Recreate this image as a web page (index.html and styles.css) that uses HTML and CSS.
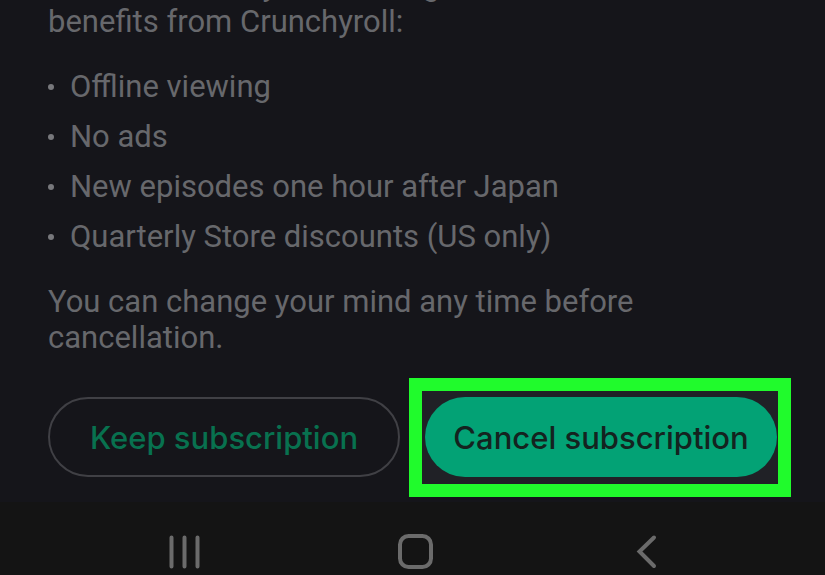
FILE: index.html
```
<!DOCTYPE html>
<html lang="en">
<head>
    <meta charset="UTF-8">
    <meta name="viewport" content="width=device-width, initial-scale=1.0">
    <title>Cancel subscription</title>
    <link rel="stylesheet" href="styles.css">
</head>
<body>

    <!-- Cancellation sheet -->
    <main class="sheet">
        <p class="sheet-text">You immediately start losing<br>benefits from Crunchyroll:</p>

        <ul class="benefits">
            <li>Offline viewing</li>
            <li>No ads</li>
            <li>New episodes one hour after Japan</li>
            <li>Quarterly Store discounts (US only)</li>
        </ul>

        <p class="sheet-text">You can change your mind any time before cancellation.</p>

        <div class="actions">
            <button type="button" class="btn btn-outline">Keep subscription</button>
            <div class="highlight">
                <button type="button" class="btn btn-filled">Cancel subscription</button>
            </div>
        </div>
    </main>

    <!-- System navigation -->
    <nav class="nav-bar">
        <button type="button" class="nav-btn" aria-label="Recent apps">
            <svg width="40" height="40" viewBox="0 0 40 40">
                <path d="M6.5 6.5v29M19.5 6.5v29M32.5 6.5v29"/>
            </svg>
        </button>
        <button type="button" class="nav-btn" aria-label="Home">
            <svg width="40" height="40" viewBox="0 0 40 40">
                <rect x="4" y="5" width="31" height="31" rx="8.5"/>
            </svg>
        </button>
        <button type="button" class="nav-btn" aria-label="Back">
            <svg width="40" height="40" viewBox="0 0 40 40">
                <path d="M27 6.5L12.5 20.5 27 35"/>
            </svg>
        </button>
    </nav>

</body>
</html>
```
FILE: styles.css
```
/* General Page Styles */
* {
    box-sizing: border-box;
}

body {
    display: flex;
    flex-direction: column;
    height: 100vh;
    margin: 0;
    overflow: hidden;
    background: #15151a;
    color: #67686c;
    font-family: Roboto, sans-serif;
    font-size: 31px;
    line-height: 36px;
}

/* Sheet content stays against the bottom, above the navigation */
.sheet {
    flex: 1;
    min-height: 0;
    display: flex;
    flex-direction: column;
    justify-content: flex-end;
    padding: 0 48px 25px;
}

.sheet-text {
    margin: 0;
}

.benefits {
    display: flex;
    flex-direction: column;
    gap: 14px;
    margin: 29px 0;
    padding: 0;
    list-style: none;
}

.benefits li {
    display: flex;
    align-items: center;
    gap: 16px;
}

.benefits li::before {
    content: "";
    width: 6px;
    height: 6px;
    border-radius: 50%;
    background: #77787c;
}

/* Buttons */
.actions {
    display: grid;
    grid-template-columns: 1fr 1fr;
    gap: 25px;
    margin-top: 41px;
}

.btn {
    width: 100%;
    height: 80px;
    padding: 0;
    border: none;
    border-radius: 40px;
    font-family: Inter, sans-serif;
    font-size: 31px;
    font-weight: 500;
    white-space: nowrap;
}

.btn-outline {
    border: 2px solid #404045;
    background: transparent;
    color: #08714f;
}

.btn-filled {
    background: #03a275;
    color: #14231f;
}

/* Green frame around the cancel button */
.highlight {
    position: relative;
    z-index: 0;
}

.highlight::before {
    content: "";
    position: absolute;
    z-index: -1;
    top: -19px;
    right: -14px;
    bottom: -20px;
    left: -16px;
    border: 13px solid #20fb2c;
    background: #202126;
}

/* Navigation Bar */
.nav-bar {
    display: flex;
    justify-content: space-around;
    height: 73px;
    padding: 29px 63px 0 69px;
    background: #141414;
}

.nav-btn {
    width: 40px;
    height: 40px;
    padding: 0;
    border: none;
    background: none;
}

.nav-btn svg {
    display: block;
    fill: none;
    stroke: #6b6b6b;
    stroke-width: 4;
    stroke-linecap: round;
    stroke-linejoin: miter;
}
```
